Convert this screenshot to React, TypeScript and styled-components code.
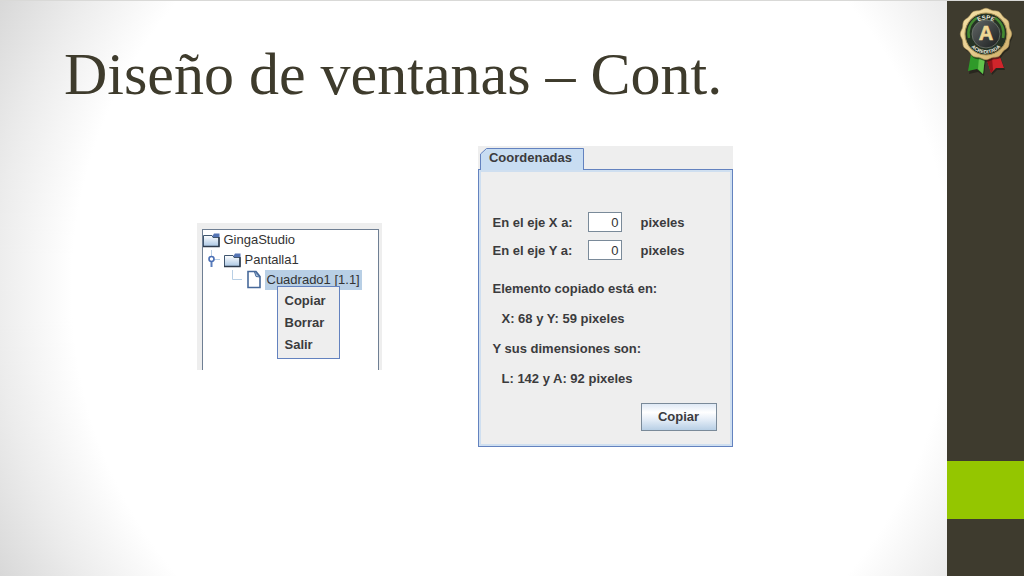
import React from 'react';
import styled, { createGlobalStyle } from 'styled-components';

const GlobalStyle = createGlobalStyle`
  *, *::before, *::after { box-sizing: border-box; }
  body {
    margin: 0;
    font-family: "Liberation Sans", Arial, sans-serif;
    font-size: 13px;
    line-height: 16px;
    color: #3b3b3d;
  }
`;

const Slide = styled.div`
  display: flex;
  min-height: 100vh;
  border-top: 1px solid #d9d9d7;
  background: radial-gradient(circle farthest-corner at 50% 50%, #fff 75%, #ececec 88%, #d8d8d8 100%);
`;

const Content = styled.main`
  flex: 1;
  min-width: 0;
`;

const Title = styled.h1`
  margin: 0;
  padding: 39px 64px 0;
  font-family: "Liberation Serif", "Times New Roman", serif;
  font-size: 60px;
  font-weight: 400;
  line-height: 68px;
  color: #3e3b2c;
`;

const Figures = styled.div`
  display: flex;
  justify-content: center;
  align-items: flex-start;
  gap: 96px;
  padding: 38px 18px 0 0;
`;

const TreePanel = styled.section`
  width: 185px;
  margin-top: 77px;
  padding: 6px 3px 0 5px;
  background: #eee;
`;

const Tree = styled.ul`
  position: relative;
  height: 141px;
  margin: 0;
  padding: 0;
  list-style: none;
  background: #fff;
  border: 1px solid #6f7f93;
  border-bottom: 0;
`;

const TreeRow = styled.li<{ $level: number }>`
  display: flex;
  align-items: center;
  height: 20px;
  padding-left: ${({ $level }) => ($level ? $level * 22 - 19 : 0)}px;
`;

const TreeLabel = styled.span<{ $selected?: boolean }>`
  padding: 2px;
  margin-left: 2px;
  color: #333;
  background: ${({ $selected }) => ($selected ? '#b8cfe5' : 'transparent')};
`;

const Menu = styled.div`
  position: absolute;
  top: 56px;
  left: 74px;
  display: flex;
  flex-direction: column;
  width: 63px;
  padding: 3px 0 2px;
  background: #eee;
  border: 1px solid #6382bf;
`;

const MenuItem = styled.button`
  height: 22px;
  padding: 0 7px;
  font: inherit;
  font-weight: 700;
  text-align: left;
  color: inherit;
  background: none;
  border: 0;
`;

const CoordPanel = styled.section`
  width: 255px;
  background: #eee;
  font-weight: 700;
`;

const Tab = styled.button`
  position: relative;
  display: block;
  width: 106px;
  height: 24px;
  margin: 0 0 -1px;
  padding: 0;
  font: inherit;
  color: inherit;
  background: none;
  border: 0;
`;

const TabShape = styled.svg`
  position: absolute;
  inset: 0;
`;

const TabText = styled.span`
  position: relative;
`;

const Body = styled.form`
  display: flex;
  flex-direction: column;
  height: 278px;
  padding: 39px 15px 0 12px;
  border: 1px solid #6382bf;
  box-shadow: inset 0 0 0 2px #cfdff0;
`;

const Field = styled.div`
  display: grid;
  grid-template-columns: 95px 34px auto;
  align-items: center;
  height: 28px;
  padding-left: 2px;
`;

const NumberBox = styled.input`
  width: 34px;
  height: 20px;
  margin-bottom: 2px;
  padding: 1px 2px 0;
  font: inherit;
  font-weight: 400;
  text-align: right;
  color: #333;
  background: #fff;
  border: 1px solid #7a8a99;
  border-radius: 0;
  outline: 0;
`;

const Unit = styled.span`
  padding-left: 19px;
`;

const Line = styled.p<{ $indent?: boolean }>`
  margin: 0 0 14px;
  padding-left: ${({ $indent }) => ($indent ? 11 : 2)}px;
`;

const Results = styled.div`
  padding-top: 16px;
`;

const CopyButton = styled.button`
  align-self: flex-end;
  width: 76px;
  height: 28px;
  margin-top: 2px;
  padding: 0;
  font: inherit;
  color: inherit;
  background: linear-gradient(#dfe9f5 0%, #fff 32%, #e4edf7 60%, #b8cfe5 100%);
  border: 1px solid #7a8a99;
  border-radius: 0;
`;

const Sidebar = styled.aside`
  display: flex;
  flex-direction: column;
  flex: 0 0 77px;
`;

const Band = styled.div<{ $grow: number; $accent?: boolean }>`
  flex: ${({ $grow }) => $grow} 0 0;
  display: flex;
  justify-content: center;
  background: ${({ $accent }) => ($accent ? '#94c600' : '#3e3b2e')};
`;

const Badge = styled.svg`
  flex: none;
  margin-top: 6px;
`;

const Folder = () => (
  <svg width="17" height="16" viewBox="0 0 17 16" aria-hidden="true">
    <defs>
      <linearGradient id="folder" x1="0" y1="0" x2="0" y2="1">
        <stop offset="0" stopColor="#fff" />
        <stop offset="1" stopColor="#a9c6e3" />
      </linearGradient>
    </defs>
    <path d="M0.500 3.500H9L10 5.500H16V14.500H0.500Z" fill="url(#folder)" stroke="#40566f" />
    <path d="M9.500 4L11 1.500H16.500V5H10Z" fill="#5474b4" />
    <path d="M16 5V14.500H0" stroke="#2e3b4c" strokeWidth="1.500" fill="none" />
  </svg>
);

const Handle = () => (
  <svg width="18" height="20" viewBox="0 0 18 20" aria-hidden="true">
    <path d="M5.500 0V7M8 9.500H14" stroke="#b8cfe5" />
    <path d="M5.500 11V17" stroke="#5a7dbb" strokeWidth="2" />
    <circle cx="5.500" cy="9" r="2.500" fill="#fff" stroke="#4a6fb5" strokeWidth="1.600" />
  </svg>
);

const Elbow = () => (
  <svg width="18" height="20" viewBox="0 0 18 20" aria-hidden="true">
    <path d="M4.500 0V9.500H14" fill="none" stroke="#b8cfe5" />
  </svg>
);

const Leaf = () => (
  <svg width="17" height="20" viewBox="0 0 17 20" aria-hidden="true">
    <path d="M2 1.500H10L14 6.500V17.500H2Z" fill="#fff" stroke="#47699a" strokeWidth="1.600" />
    <path d="M8.500 2L10 6.500L14 7Z" fill="#b8cfe5" stroke="#47699a" />
  </svg>
);

const sealOutline = Array.from({ length: 121 }, (_, i) => {
  const angle = (i / 120) * Math.PI * 2;
  const radius = 25 + Math.cos(angle * 12) * 0.7;
  return `${i ? 'L' : 'M'}${(29 + Math.cos(angle) * radius).toFixed(2)} ${(27 + Math.sin(angle) * radius).toFixed(2)}`;
}).join(' ');

const Seal = () => (
  <Badge width="58" height="70" viewBox="0 0 58 70" role="img" aria-label="ESPE acreditada">
    <defs>
      <linearGradient id="gold" x1="0" y1="0" x2="1" y2="1">
        <stop offset="0" stopColor="#f6e3a8" />
        <stop offset="0.500" stopColor="#e8cf92" />
        <stop offset="1" stopColor="#c9a860" />
      </linearGradient>
      <linearGradient id="disc" x1="0" y1="0" x2="1" y2="1">
        <stop offset="0" stopColor="#626766" />
        <stop offset="1" stopColor="#1b1e1f" />
      </linearGradient>
      <path id="upper" d="M14.500 27A14.500 14.500 0 0 1 43.500 27" />
      <path id="lower" d="M9.500 27A19.500 19.500 0 0 0 48.500 27" />
    </defs>
    <path d="M14 47L28 50L26 67L20 63L11 65Z" fill="#000" opacity="0.350" transform="translate(1 2)" />
    <path d="M29 50L42 47L47 61L39 61L34 66Z" fill="#000" opacity="0.350" transform="translate(1 2)" />
    <path d="M14 47L28 50L26 67L20 62L11 64Z" fill="#2f9a29" />
    <path d="M22 50L28 50L26 67L21 62Z" fill="#62c34c" />
    <path d="M29 50L42 47L47 61L39 61L34 66Z" fill="#d0252b" />
    <path d="M29 50L35 50L36 63L34 66Z" fill="#94151b" />
    <path d={sealOutline} fill="#1d1b13" opacity="0.600" transform="translate(1 2)" />
    <path d={sealOutline} fill="url(#gold)" stroke="#b59a5e" strokeWidth="0.600" />
    <circle cx="29" cy="27" r="21" fill="#263325" stroke="#a99154" />
    <path d="M12 31A18 18 0 0 1 20 11M46 31A18 18 0 0 0 38 11" fill="none" stroke="#438a31" strokeWidth="2.500" />
    <circle cx="29" cy="27" r="14" fill="url(#disc)" stroke="#777e74" strokeWidth="0.700" />
    <g fontFamily="Liberation Sans" fontWeight="700" fill="#f1eee0" textAnchor="middle">
      <text fontSize="6"><textPath href="#upper" startOffset="50%">ESPE</textPath></text>
      <text fontSize="5"><textPath href="#lower" startOffset="50%">ACREDITADA</textPath></text>
      <text x="29" y="33" fontSize="20" fill="#f0d895" stroke="#f0d895" strokeWidth="0.600">A</text>
    </g>
  </Badge>
);

export default function App() {
  return (
    <>
      <GlobalStyle />
      <Slide>
        <Content>
          <Title>Diseño de ventanas – Cont.</Title>
          <Figures>
            <TreePanel>
              <Tree>
                <TreeRow $level={0}><Folder /><TreeLabel>GingaStudio</TreeLabel></TreeRow>
                <TreeRow $level={1}><Handle /><Folder /><TreeLabel>Pantalla1</TreeLabel></TreeRow>
                <TreeRow $level={2}><Elbow /><Leaf /><TreeLabel $selected>Cuadrado1 [1.1]</TreeLabel></TreeRow>
                <li>
                  <Menu>
                    <MenuItem type="button">Copiar</MenuItem>
                    <MenuItem type="button">Borrar</MenuItem>
                    <MenuItem type="button">Salir</MenuItem>
                  </Menu>
                </li>
              </Tree>
            </TreePanel>
            <CoordPanel>
              <Tab type="button">
                <TabShape width="106" height="24" viewBox="0 0 106 24" aria-hidden="true">
                  <path d="M2.500 24V8L8.500 2.500H105.500V24" fill="#c8ddf2" stroke="#6382bf" />
                </TabShape>
                <TabText>Coordenadas</TabText>
              </Tab>
              <Body onSubmit={(e) => e.preventDefault()}>
                <Field>
                  <label htmlFor="axis-x">En el eje X a:</label>
                  <NumberBox id="axis-x" defaultValue="0" />
                  <Unit>pixeles</Unit>
                </Field>
                <Field>
                  <label htmlFor="axis-y">En el eje Y a:</label>
                  <NumberBox id="axis-y" defaultValue="0" />
                  <Unit>pixeles</Unit>
                </Field>
                <Results>
                  <Line>Elemento copiado está en:</Line>
                  <Line $indent>X: 68 y Y: 59 pixeles</Line>
                  <Line>Y sus dimensiones son:</Line>
                  <Line $indent>L: 142 y A: 92 pixeles</Line>
                </Results>
                <CopyButton type="submit">Copiar</CopyButton>
              </Body>
            </CoordPanel>
          </Figures>
        </Content>
        <Sidebar>
          <Band $grow={8}><Seal /></Band>
          <Band $grow={1} $accent />
          <Band $grow={1} />
        </Sidebar>
      </Slide>
    </>
  );
}
